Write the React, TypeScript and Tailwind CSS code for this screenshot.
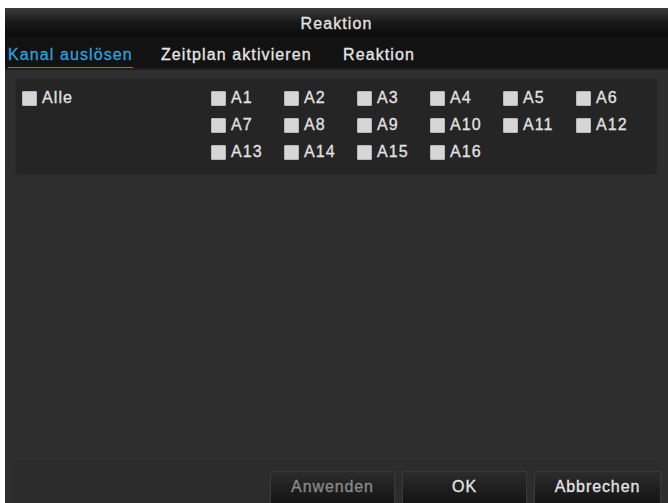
const font = { fontFamily: '"Liberation Sans", Arial, sans-serif' };

const channels = Array.from({ length: 16 }, (_, i) => `A${i + 1}`);

const text = 'text-[16px] tracking-[1.1px] [-webkit-text-stroke:0.3px_currentColor]';

function Box() {
  return <span className="block size-[15px] shrink-0 rounded-[1px] border border-[#b8b8b8] bg-[#d6d6d6]" />;
}

function Check({ label }: { label: string }) {
  return (
    <label className={`flex h-[16px] items-center gap-[5px] text-[#e2e2e2] ${text}`}>
      <Box />
      {label}
    </label>
  );
}

function Button({ children, disabled, wide }: { children: string; disabled?: boolean; wide?: boolean }) {
  return (
    <button
      className={
        'h-[32px] rounded-t-[2px] border border-b-0 border-[#3a3a3a] bg-gradient-to-b from-[#2c2c2c] to-[#141414] pb-[2px] text-[16px] tracking-[0.9px] [-webkit-text-stroke:0.3px_currentColor] ' +
        (wide ? 'w-[127px] ' : 'w-[125px] ') +
        (disabled ? 'text-[#8a8a8a]' : 'text-[#e6e6e6]')
      }
    >
      {children}
    </button>
  );
}

export default function App() {
  return (
    <div className="flex h-[503px] w-[668px] bg-white pl-[5px] pt-[8px]" style={font}>
      <div className="flex flex-1 flex-col bg-[#2e2e2e]">
        <div className={`flex h-[29px] items-start justify-center bg-gradient-to-b from-[#3c3c3c] via-[#191919] to-[#0a0a0a] pt-[4px] text-[#e4e4e4] ${text}`}>
          Reaktion
        </div>
        <div className={`flex h-[31px] items-start bg-[#121212] pl-[3px] pt-[6px] ${text}`}>
          <div className="w-[153px]">
            <span className="inline-block border-b-2 border-[#2b8fc6] text-[#2fa0dc]">Kanal auslösen</span>
          </div>
          <div className="w-[182px] text-[#e6e6e6]">Zeitplan aktivieren</div>
          <div className="text-[#e6e6e6]">Reaktion</div>
        </div>
        <div className="h-[2px] bg-[#1e1e1e]" />
        <div className="flex flex-1 flex-col px-[10px] pt-[8px]">
          <div className="flex h-[97px] rounded-[3px] border border-[#2b2b2b] bg-[#252525]">
            <div className="w-[195px] pl-[6px] pt-[11px]">
              <Check label="Alle" />
            </div>
            <div className="grid grid-cols-[repeat(6,73px)] content-start gap-y-[11px] pt-[11px]">
              {channels.map((c) => (
                <Check key={c} label={c} />
              ))}
            </div>
          </div>
          <div className="mt-auto -mx-[3px] flex h-[43px] items-end justify-end gap-[7px] border-t border-[#2b2b2b] bg-[#2c2c2c]">
            <Button disabled>Anwenden</Button>
            <Button>OK</Button>
            <Button wide>Abbrechen</Button>
          </div>
        </div>
      </div>
    </div>
  );
}
